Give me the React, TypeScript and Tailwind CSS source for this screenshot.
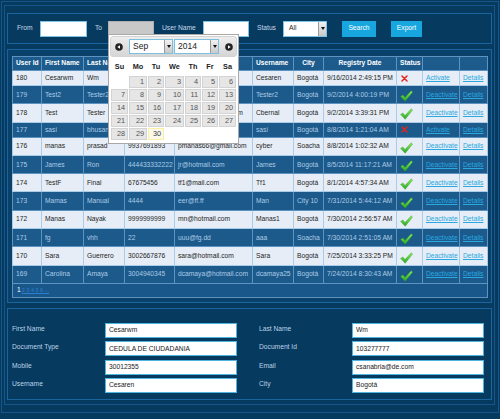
import React from "react"

type Row = {
  id: number
  first: string
  last: string
  mobile: string
  email: string
  user: string
  city: string
  date: string
  active: boolean
}

const rows: Row[] = [
  { id: 180, first: "Cesarwm", last: "Wm", mobile: "30012355", email: "csanabria@de.com", user: "Cesaren", city: "Bogotá", date: "9/16/2014 2:49:15 PM", active: false },
  { id: 179, first: "Test2", last: "Tester2", mobile: "3001234567", email: "test2@hotmail.com", user: "Tester2", city: "Bogotá", date: "9/2/2014 4:00:19 PM", active: true },
  { id: 178, first: "Test", last: "Tester", mobile: "3001112233", email: "cbernal@hotmail.com", user: "Cbernal", city: "Bogotá", date: "9/2/2014 3:39:31 PM", active: true },
  { id: 177, first: "sasi", last: "bhusan", mobile: "9937000000", email: "sasi@gmail.com", user: "sasi", city: "Bogotá", date: "8/8/2014 1:21:04 AM", active: false },
  { id: 176, first: "manas", last: "prasad", mobile: "9937691893", email: "pmanas66@gmail.com", user: "cyber", city: "Soacha", date: "8/8/2014 1:02:32 AM", active: true },
  { id: 175, first: "James", last: "Ron", mobile: "444433332222", email: "jr@hotmail.com", user: "James", city: "Bogotá", date: "8/5/2014 11:17:21 AM", active: true },
  { id: 174, first: "TestF", last: "Final", mobile: "67675456", email: "tf1@mail.com", user: "Tf1", city: "Bogotá", date: "8/1/2014 4:57:34 AM", active: true },
  { id: 173, first: "Mamas", last: "Manual", mobile: "4444", email: "eer@ff.ff", user: "Man", city: "City 10", date: "7/31/2014 5:44:12 AM", active: true },
  { id: 172, first: "Manas", last: "Nayak", mobile: "9999999999", email: "mn@hotmail.com", user: "Manas1", city: "Bogotá", date: "7/30/2014 2:56:57 AM", active: true },
  { id: 171, first: "fg", last: "vhh", mobile: "22", email: "uuu@fg.dd", user: "aaa", city: "Soacha", date: "7/30/2014 2:51:05 AM", active: true },
  { id: 170, first: "Sara", last: "Guerrero", mobile: "3002667876", email: "sara@hotmail.com", user: "Sara", city: "Bogotá", date: "7/25/2014 3:33:25 PM", active: true },
  { id: 169, first: "Carolina", last: "Amaya", mobile: "3004940345", email: "dcamaya@hotmail.com", user: "dcamaya25", city: "Bogotá", date: "7/24/2014 8:30:43 AM", active: true },
]

const cols = [29, 42, 41, 50, 78, 41, 30, 73, 26, 37, 28]
const headers = ["User Id", "First Name", "Last Name", "Mobile", "Email", "Username", "City", "Registry Date", "Status", "", ""]

const details = [
  ["First Name", "Cesarwm", "Last Name", "Wm"],
  ["Document Type", "CEDULA DE CIUDADANIA", "Document Id", "103277777"],
  ["Mobile", "30012355", "Email", "csanabria@de.com"],
  ["Username", "Cesaren", "City", "Bogotá"],
]

const dayNames = ["Su", "Mo", "Tu", "We", "Th", "Fr", "Sa"]
const days: (number | null)[] = [null, ...Array.from({ length: 30 }, (_, i) => i + 1)]

function Check() {
  return (
    <svg width="13" height="12" viewBox="0 0 13 12" className="inline-block">
      <defs>
        <linearGradient id="chk" x1="0" y1="0" x2="0" y2="1">
          <stop offset="0" stopColor="#8ef060" />
          <stop offset="1" stopColor="#27a61f" />
        </linearGradient>
      </defs>
      <path d="M0.6 6.4 L2.9 4.9 L5 7.6 L11.2 0.8 L12.6 2.1 L5.2 11.3 Z" fill="url(#chk)" stroke="#2f9a25" strokeWidth="0.4" />
    </svg>
  )
}

function Cross() {
  return (
    <svg width="7" height="7" viewBox="0 0 7 7" className="inline-block">
      <path d="M1 1 L6 6 M6 1 L1 6" stroke="#e3261d" strokeWidth="1.5" strokeLinecap="round" />
    </svg>
  )
}

function Arrow() {
  return (
    <span className="flex h-full w-[8px] items-center justify-center border-l border-[#9a9a9a] bg-gradient-to-b from-[#f2f2f2] to-[#c9c9c9]">
      <svg width="4" height="3" viewBox="0 0 4 3">
        <path d="M0 0 H4 L2 3 Z" fill="#111" />
      </svg>
    </span>
  )
}

function NavIcon({ dir }: { dir: "prev" | "next" }) {
  return (
    <svg width="8" height="8" viewBox="0 0 8 8">
      <circle cx="4" cy="4" r="3.8" fill="#222" />
      {dir === "prev" ? <path d="M2.3 4 L5 2.2 V5.8 Z" fill="#fff" /> : <path d="M5.7 4 L3 2.2 V5.8 Z" fill="#fff" />}
    </svg>
  )
}

function Calendar() {
  return (
    <div className="absolute left-[108px] top-[34px] w-[131px] h-[110px] bg-white border border-[#a8a8a8] p-[1px]">
      <div className="flex h-[21px] items-center rounded-[3px] border border-[#d3d3d3] bg-gradient-to-b from-[#ededed] to-[#d6d6d6]">
        <span className="ml-[4px] flex">
          <NavIcon dir="prev" />
        </span>
        <div className="ml-[6px] flex h-[15px] w-[44px] items-center border border-[#7cc0e0] bg-white">
          <span className="flex-1 pl-[3px] text-[8.5px] text-[#222]">Sep</span>
          <Arrow />
        </div>
        <div className="ml-[1px] flex h-[15px] w-[45px] items-center border border-[#7cc0e0] bg-white">
          <span className="flex-1 pl-[3px] text-[8.5px] text-[#222]">2014</span>
          <Arrow />
        </div>
        <span className="ml-[6px] flex">
          <NavIcon dir="next" />
        </span>
      </div>
      <div className="mt-[3px] grid h-[14px] grid-cols-[17px_18px_16px_19px_16px_16px_17px] gap-x-[1px] pl-[1px] items-center">
        {dayNames.map((d) => (
          <span key={d} className="text-center text-[7.3px] font-bold text-[#222]">
            {d}
          </span>
        ))}
      </div>
      <div className="mt-[2px] grid grid-cols-[17px_18px_16px_19px_16px_16px_17px] gap-[1px] pl-[1px]">
        {days.map((d, i) =>
          d === null ? (
            <span key={i} />
          ) : (
            <span
              key={i}
              className={
                d === 30
                  ? "h-[12px] border border-[#fcefa1] bg-[#fbf9ee] pr-[2px] text-right text-[7.3px] leading-[10px] text-[#363636]"
                  : "h-[12px] border border-[#d3d3d3] bg-[#e6e6e6] pr-[2px] text-right text-[7.3px] leading-[10px] text-[#555]"
              }
            >
              {d}
            </span>
          )
        )}
      </div>
    </div>
  )
}

export default function App() {
  return (
    <div className="relative w-[500px] h-[419px] bg-[#063a5e] pl-[1px] pt-[1px] font-['Liberation_Sans',Arial,sans-serif] text-[6.7px]">
      <div className="w-[498px] h-[412px] border border-[#15558a] pl-[2px] pt-[3px]">
        <div className="w-[491px] h-[400px] border border-[#15558a] pl-[2px] pt-[7px]">
          {/* filters */}
          <div className="flex h-[31px] w-[485px] items-center border border-[#1a64a0] text-[#c6d9ec]">
            <span className="ml-[9px] w-[23px]">From</span>
            <span className="h-[16px] w-[47px] border border-[#7cc3e6] bg-white" />
            <span className="ml-[8px] w-[13px]">To</span>
            <span className="h-[16px] w-[46px] border border-[#b0b0b0] bg-[#c8c8c8]" />
            <span className="ml-[8px] w-[41px]">User Name</span>
            <span className="h-[16px] w-[46px] border border-[#7cc3e6] bg-white" />
            <span className="ml-[8px] w-[26px]">Status</span>
            <span className="flex h-[16px] w-[44px] items-center border border-[#7cc3e6] bg-white">
              <span className="flex-1 pl-[5px] text-[#222]">All</span>
              <Arrow />
            </span>
            <button className="ml-[15px] h-[16px] w-[34px] bg-[#17a6de] text-[6.7px] text-white">Search</button>
            <button className="ml-[15px] h-[16px] w-[31px] bg-[#17a6de] text-[6.7px] text-white">Export</button>
          </div>

          {/* table */}
          <div className="mt-[5px] h-[254px] w-[485px] border border-[#1a64a0] bg-[#0a416a] pl-[4px] pt-[6px]">
            <table className="w-[475px] table-fixed border-collapse">
              <colgroup>
                {cols.map((w, i) => (
                  <col key={i} style={{ width: w }} />
                ))}
              </colgroup>
              <thead>
                <tr className="h-[14px] bg-[#1c5b8c]">
                  {headers.map((h, i) => (
                    <th
                      key={i}
                      className={`border border-[#5d93c0] px-[3px] font-bold text-white whitespace-nowrap overflow-hidden ${i < 7 && i !== 6 ? "text-left" : "text-center"}`}
                    >
                      {h}
                    </th>
                  ))}
                </tr>
              </thead>
              <tbody>
                {rows.map((r, idx) => {
                  const dark = idx % 2 === 1
                  const cell = dark
                    ? "border border-[#5d93c0] px-[3px] text-[#aecbe6] whitespace-nowrap overflow-hidden"
                    : "border border-[#a9cde8] px-[3px] text-[#1e1e1e] whitespace-nowrap overflow-hidden"
                  return (
                    <tr key={r.id} className={`${r.active ? "h-[18.3px]" : "h-[15px]"} ${dark ? "bg-[#1b5a8b]" : "bg-[#e6edf6]"}`}>
                      <td className={cell}>{r.id}</td>
                      <td className={cell}>{r.first}</td>
                      <td className={cell}>{r.last}</td>
                      <td className={cell}>{r.mobile}</td>
                      <td className={cell}>{r.email}</td>
                      <td className={cell}>{r.user}</td>
                      <td className={cell}>{r.city}</td>
                      <td className={cell}>{r.date}</td>
                      <td className={`${cell} leading-none`}>
                        {r.active ? (
                          <span className="ml-[0px] mt-[3px] inline-block">
                            <Check />
                          </span>
                        ) : (
                          <span className="ml-[1px] inline-block">
                            <Cross />
                          </span>
                        )}
                      </td>
                      <td className={cell}>
                        <span className="text-[#2aa8e0] underline">{r.active ? "Deactivate" : "Activate"}</span>
                      </td>
                      <td className={cell}>
                        <span className="text-[#2aa8e0] underline">Details</span>
                      </td>
                    </tr>
                  )
                })}
                <tr className="h-[14px] bg-[#19578a]">
                  <td colSpan={11} className="border border-[#5d93c0] px-[4px]">
                    <span className="text-white">1</span>
                    <span className="ml-[1px] text-[5.5px] text-[#2a7fd3] underline">2 3 4 5 6 ...</span>
                  </td>
                </tr>
              </tbody>
            </table>
          </div>

          {/* details */}
          <div className="mt-[5px] flex h-[92px] w-[485px] gap-[22px] border border-[#1a64a0] pl-[4px] pt-[14px]">
            {[0, 2].map((c) => (
              <div key={c} className="flex flex-col gap-[3.3px]">
                {details.map((d) => (
                  <div key={d[c]} className="flex h-[15px] items-start">
                    <span className="w-[93px] pt-[1px] text-[#bcd3e9]">{d[c]}</span>
                    <span className="flex h-[15px] w-[132px] items-center border border-[#4fb4de] bg-white pl-[3px] text-[#222]">
                      {d[c + 1]}
                    </span>
                  </div>
                ))}
              </div>
            ))}
          </div>
        </div>
      </div>
      <Calendar />
    </div>
  )
}
